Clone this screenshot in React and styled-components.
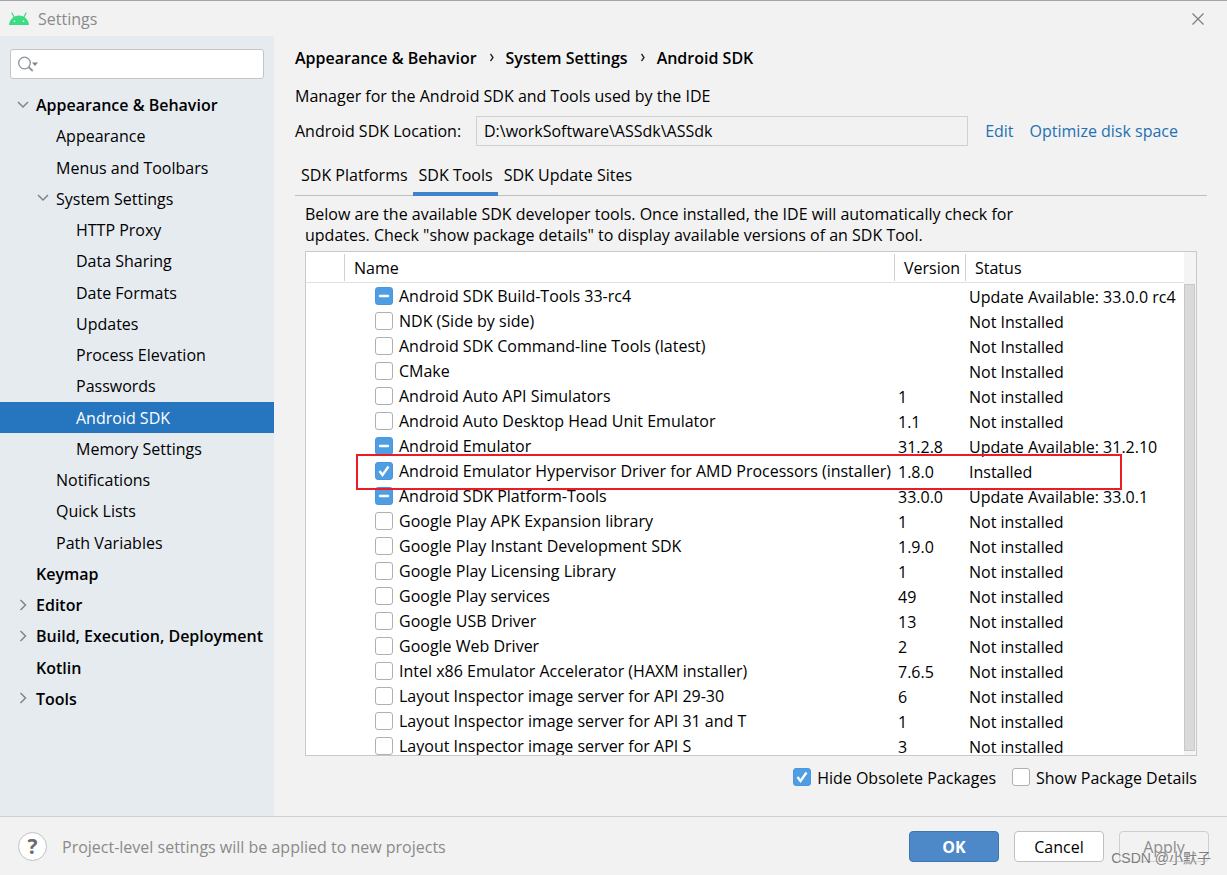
import React from "react";
import styled, { createGlobalStyle, css } from "styled-components";

const GlobalStyle = createGlobalStyle`
  *, *::before, *::after { box-sizing: border-box; }
  body {
    margin: 0;
    background: #f2f2f2;
    color: #000;
    font: 16px/21px "Open Sans", "Noto Sans CJK SC", sans-serif;
  }
  button, input { font: inherit; color: inherit; }
`;

const Dialog = styled.div`
  display: flex;
  flex-direction: column;
  height: 100vh;
  overflow: hidden;
  border-top: 1px solid #a6a6a8;
`;

const TitleBar = styled.header`
  display: flex;
  align-items: center;
  flex: none;
  height: 35px;
  padding: 0 22px 0 8px;
  color: #8a8a8a;
`;

const Title = styled.h1`
  flex: 1;
  margin: 0 0 0 8px;
  padding-top: 2px;
  font-size: 16px;
  font-weight: 400;
  line-height: 21px;
`;

const IconButton = styled.button`
  display: flex;
  padding: 0;
  border: 0;
  background: none;
  color: #7d7d7d;
`;

const Body = styled.div`
  display: flex;
  flex: 1;
  min-height: 0;
`;

const Sidebar = styled.aside`
  flex: none;
  width: 274px;
  padding-top: 13px;
  overflow: hidden;
  background: #e6ebf0;
`;

const SearchBox = styled.label`
  display: flex;
  align-items: center;
  height: 30px;
  margin: 0 10px 10px;
  padding: 0 6px;
  border: 1px solid #c2c5c8;
  border-radius: 3px;
  background: #fff;
`;

const SearchInput = styled.input`
  flex: 1;
  min-width: 0;
  border: 0;
  outline: 0;
  background: none;
`;

const Tree = styled.ul`
  display: grid;
  grid-auto-rows: 1fr;
  height: 625px;
  margin: 0;
  padding: 0;
  list-style: none;
`;

const TreeItem = styled.li`
  display: flex;
  align-items: center;
  padding-left: ${(p) => 16 + p.$level * 20}px;
  font-weight: ${(p) => (p.$level === 0 ? 600 : 400)};
  white-space: nowrap;
  ${(p) =>
    p.$selected &&
    css`
      background: #2675bf;
      color: #fff;
    `}
`;

const TreeArrow = styled.span`
  display: flex;
  flex: none;
  width: 20px;
`;

const ItemText = styled.span`
  padding-top: 2px;
`;

const Content = styled.main`
  display: flex;
  flex: 1;
  flex-direction: column;
  min-width: 0;
  padding: 8px 20px 18px 21px;
`;

const Breadcrumbs = styled.nav`
  display: flex;
  align-items: center;
  height: 28px;
  font-weight: 600;
`;

const Crumb = styled.span`
  display: flex;
  align-items: center;
`;

const CrumbArrow = styled.svg`
  margin: 0 11px 0 12px;
`;

const Intro = styled.p`
  height: 28px;
  margin: 10px 0 6px;
  line-height: 28px;
`;

const LocationRow = styled.div`
  display: flex;
  align-items: center;
  padding-right: 29px;
`;

const LocationLabel = styled.label`
  flex: none;
  width: 181px;
`;

const LocationInput = styled.input`
  flex: 1;
  min-width: 0;
  height: 30px;
  margin-right: 17px;
  padding: 0 7px;
  border: 1px solid #d0d0d0;
  outline: 0;
  background: #f2f2f2;
`;

const Link = styled.a`
  margin-left: ${(p) => (p.$spaced ? 16 : 0)}px;
  color: #2470b3;
  text-decoration: none;
`;

const Tabs = styled.div`
  display: flex;
  height: 43px;
  margin-top: 7px;
  box-shadow: inset 0 -1px #c0c0c0;
`;

const Tab = styled.button`
  padding: 6px 5px 0 6px;
  border: 0;
  border-bottom: 4px solid ${(p) => (p.$active ? "#4083c9" : "transparent")};
  background: none;
`;

const Panel = styled.section`
  display: flex;
  flex: 1;
  flex-direction: column;
  min-height: 0;
  padding: 8px 10px 0;
`;

const Description = styled.p`
  max-width: 740px;
  margin: 0 0 5px;
`;

const TableFrame = styled.div`
  position: relative;
  display: flex;
  flex: 1;
  align-items: flex-start;
  min-height: 0;
  overflow: hidden;
  border: 1px solid #c9c9c9;
  background: #fff;
`;

const PackageTable = styled.table`
  flex: 1;
  min-width: 0;
  table-layout: fixed;
  border-collapse: separate;
  border-spacing: 0;
`;

const Column = styled.col`
  width: ${(p) => p.$width};
`;

const HeaderCell = styled.th`
  height: 31px;
  padding: 0;
  border-bottom: 1px solid #e0e0e0;
  font-weight: 400;
  text-align: left;
`;

const HeaderText = styled.span`
  display: block;
  padding: 2px 0 0 9px;
  border-left: 1px solid #d0d0d0;
  line-height: 25px;
`;

const NameCell = styled.td`
  height: 25px;
  padding: 0 0 0 31px;
`;

const ValueCell = styled.td`
  height: 25px;
  padding: 4px 0 0 4px;
  white-space: nowrap;
`;

const CheckLabel = styled.label`
  display: flex;
  align-items: center;
  gap: 6px;
  white-space: nowrap;
`;

const CheckBox = styled.span`
  display: grid;
  flex: none;
  width: 18px;
  height: 18px;

  > * {
    grid-area: 1 / 1;
    width: 18px;
    height: 18px;
    margin: 0;
  }
`;

const CheckInput = styled.input`
  appearance: none;
  border: 1px solid ${(p) => (p.$filled ? "#4b97df" : "#b0b0b0")};
  border-radius: 3px;
  background: ${(p) => (p.$filled ? "#4f9ee3" : "#fff")};
`;

const CheckMark = styled.svg`
  pointer-events: none;
`;

const ScrollBar = styled.div`
  flex: none;
  align-self: stretch;
  width: 12px;
  padding: 32px 1px 4px 0;
  background: #f4f4f4;
`;

const ScrollThumb = styled.div`
  height: 100%;
  border: 1px solid #c8c8c8;
  background: #dadada;
`;

const RowHighlight = styled.div`
  position: absolute;
  top: 202px;
  right: 74px;
  left: 50px;
  height: 36px;
  border: 2px solid #ed1c24;
  pointer-events: none;
`;

const Options = styled.div`
  display: flex;
  align-items: center;
  justify-content: flex-end;
  gap: 16px;
  height: 42px;
`;

const Footer = styled.footer`
  position: relative;
  display: flex;
  align-items: center;
  flex: none;
  gap: 15px;
  height: 59px;
  padding: 0 18px;
  border-top: 1px solid #d0d0d0;
`;

const HelpButton = styled.button`
  width: 29px;
  height: 29px;
  padding: 0;
  border: 1px solid #c0c0c0;
  border-radius: 50%;
  background: #fff;
  color: #6a6a6a;
  font-size: 21px;
  font-weight: 700;
  line-height: 27px;
`;

const FooterNote = styled.span`
  flex: 1;
  padding-top: 2px;
  color: #8a8a8a;
`;

const buttonKinds = {
  primary: css`
    border-color: #3d75b3;
    background: #4d89c9;
    color: #fff;
    font-weight: 700;
  `,
  normal: css`
    border-color: #c0c0c0;
    background: #fff;
  `,
  disabled: css`
    border-color: #cfcfcf;
    background: #f2f2f2;
    color: #8c8c8c;
  `,
};

const ActionButton = styled.button`
  width: 90px;
  height: 31px;
  padding: 2px 0 0;
  border: 1px solid;
  border-radius: 4px;
  ${(p) => buttonKinds[p.$kind]}
`;

const Watermark = styled.span`
  position: absolute;
  right: 16px;
  bottom: 7px;
  color: #7c7c7c;
  font: 14px/20px "Liberation Sans", "Noto Sans CJK SC", sans-serif;
  text-shadow: 0 0 1px #fff;
`;

const tree = [
  ["Appearance & Behavior", 0, "open"],
  ["Appearance", 1],
  ["Menus and Toolbars", 1],
  ["System Settings", 1, "open"],
  ["HTTP Proxy", 2],
  ["Data Sharing", 2],
  ["Date Formats", 2],
  ["Updates", 2],
  ["Process Elevation", 2],
  ["Passwords", 2],
  ["Android SDK", 2, null, true],
  ["Memory Settings", 2],
  ["Notifications", 1],
  ["Quick Lists", 1],
  ["Path Variables", 1],
  ["Keymap", 0],
  ["Editor", 0, "closed"],
  ["Build, Execution, Deployment", 0, "closed"],
  ["Kotlin", 0],
  ["Tools", 0, "closed"],
];

const packages = [
  ["Android SDK Build-Tools 33-rc4", "", "Update Available: 33.0.0 rc4", "partial"],
  ["NDK (Side by side)", "", "Not Installed"],
  ["Android SDK Command-line Tools (latest)", "", "Not Installed"],
  ["CMake", "", "Not Installed"],
  ["Android Auto API Simulators", "1", "Not installed"],
  ["Android Auto Desktop Head Unit Emulator", "1.1", "Not installed"],
  ["Android Emulator", "31.2.8", "Update Available: 31.2.10", "partial"],
  ["Android Emulator Hypervisor Driver for AMD Processors (installer)", "1.8.0", "Installed", "checked"],
  ["Android SDK Platform-Tools", "33.0.0", "Update Available: 33.0.1", "partial"],
  ["Google Play APK Expansion library", "1", "Not installed"],
  ["Google Play Instant Development SDK", "1.9.0", "Not installed"],
  ["Google Play Licensing Library", "1", "Not installed"],
  ["Google Play services", "49", "Not installed"],
  ["Google USB Driver", "13", "Not installed"],
  ["Google Web Driver", "2", "Not installed"],
  ["Intel x86 Emulator Accelerator (HAXM installer)", "7.6.5", "Not installed"],
  ["Layout Inspector image server for API 29-30", "6", "Not installed"],
  ["Layout Inspector image server for API 31 and T", "1", "Not installed"],
  ["Layout Inspector image server for API S", "3", "Not installed"],
];

function AndroidLogo() {
  return (
    <svg width="22" height="14" viewBox="0 0 22 14" aria-hidden="true">
      <path d="M1 13C1.300 8.500 5.200 3.500 11 3.500s9.700 5 10 9.500z" fill="#3ddc84" />
      <path d="M6.200 5.500 4 1M15.800 5.500 18 1" stroke="#3ddc84" strokeWidth="1.200" strokeLinecap="round" />
      <circle cx="6.500" cy="9.300" r="0.800" fill="#fff" />
      <circle cx="15.500" cy="9.300" r="0.800" fill="#fff" />
    </svg>
  );
}

function SearchIcon() {
  return (
    <svg width="22" height="18" viewBox="0 0 22 18" aria-hidden="true">
      <circle cx="7.500" cy="8" r="5.800" fill="none" stroke="#8a949d" strokeWidth="1.300" />
      <path d="m11.500 12 4.200 4" stroke="#8a949d" strokeWidth="1.800" />
      <path d="M15 7.500h6L18 11z" fill="#7b848c" />
    </svg>
  );
}

function Arrow({ state }) {
  return (
    <svg width="14" height="14" viewBox="0 0 14 14" aria-hidden="true">
      <path
        d={state === "open" ? "M2 4 7 9l5-5" : "M4.500 2l5 5-5 5"}
        fill="none"
        stroke="#808488"
        strokeWidth="1.500"
      />
    </svg>
  );
}

function Check({ state, children }) {
  return (
    <CheckLabel>
      <CheckBox>
        <CheckInput type="checkbox" defaultChecked={state === "checked"} $filled={Boolean(state)} />
        {state && (
          <CheckMark viewBox="0 0 18 18" aria-hidden="true">
            {state === "checked" ? (
              <path d="m4.500 9 3 4L13.500 4.500" fill="none" stroke="#fff" strokeWidth="2.300" />
            ) : (
              <path d="M5 9h8" stroke="#fff" strokeWidth="2.400" strokeLinecap="round" />
            )}
          </CheckMark>
        )}
      </CheckBox>
      <ItemText>{children}</ItemText>
    </CheckLabel>
  );
}

export default function App() {
  return (
    <>
      <GlobalStyle />
      <Dialog>
        <TitleBar>
          <AndroidLogo />
          <Title>Settings</Title>
          <IconButton aria-label="Close">
            <svg width="14" height="14" viewBox="0 0 14 14">
              <path d="m1.500 1.500 11 11m0-11-11 11" stroke="currentColor" strokeWidth="1.200" />
            </svg>
          </IconButton>
        </TitleBar>
        <Body>
          <Sidebar>
            <SearchBox>
              <SearchIcon />
              <SearchInput type="text" aria-label="Search settings" />
            </SearchBox>
            <Tree>
              {tree.map(([name, level, arrow, selected]) => (
                <TreeItem key={name} $level={level} $selected={selected}>
                  <TreeArrow>{arrow && <Arrow state={arrow} />}</TreeArrow>
                  <ItemText>{name}</ItemText>
                </TreeItem>
              ))}
            </Tree>
          </Sidebar>
          <Content>
            <Breadcrumbs>
              {["Appearance & Behavior", "System Settings", "Android SDK"].map((name, i) => (
                <Crumb key={name}>
                  {i > 0 && (
                    <CrumbArrow width="6" height="10" viewBox="0 0 6 10" aria-hidden="true">
                      <path d="m1.500 1 2.500 3.500L1.500 8" fill="none" stroke="#222" strokeWidth="1.300" />
                    </CrumbArrow>
                  )}
                  {name}
                </Crumb>
              ))}
            </Breadcrumbs>
            <Intro>Manager for the Android SDK and Tools used by the IDE</Intro>
            <LocationRow>
              <LocationLabel htmlFor="sdk-location">Android SDK Location:</LocationLabel>
              <LocationInput id="sdk-location" type="text" readOnly value="D:\workSoftware\ASSdk\ASSdk" />
              <Link href="#edit">Edit</Link>
              <Link href="#optimize" $spaced>Optimize disk space</Link>
            </LocationRow>
            <Tabs role="tablist">
              <Tab role="tab">SDK Platforms</Tab>
              <Tab role="tab" aria-selected="true" $active>SDK Tools</Tab>
              <Tab role="tab">SDK Update Sites</Tab>
            </Tabs>
            <Panel>
              <Description>
                Below are the available SDK developer tools. Once installed, the IDE will automatically check for
                updates. Check "show package details" to display available versions of an SDK Tool.
              </Description>
              <TableFrame>
                <PackageTable>
                  <colgroup>
                    <Column $width="38px" />
                    <Column $width="auto" />
                    <Column $width="71px" />
                    <Column $width="219px" />
                  </colgroup>
                  <thead>
                    <tr>
                      <HeaderCell />
                      <HeaderCell><HeaderText>Name</HeaderText></HeaderCell>
                      <HeaderCell><HeaderText>Version</HeaderText></HeaderCell>
                      <HeaderCell><HeaderText>Status</HeaderText></HeaderCell>
                    </tr>
                  </thead>
                  <tbody>
                    {packages.map(([name, version, status, state]) => (
                      <tr key={name}>
                        <td />
                        <NameCell><Check state={state}>{name}</Check></NameCell>
                        <ValueCell>{version}</ValueCell>
                        <ValueCell>{status}</ValueCell>
                      </tr>
                    ))}
                  </tbody>
                </PackageTable>
                <ScrollBar><ScrollThumb /></ScrollBar>
                <RowHighlight />
              </TableFrame>
              <Options>
                <Check state="checked">Hide Obsolete Packages</Check>
                <Check>Show Package Details</Check>
              </Options>
            </Panel>
          </Content>
        </Body>
        <Footer>
          <HelpButton aria-label="Help">?</HelpButton>
          <FooterNote>Project-level settings will be applied to new projects</FooterNote>
          <ActionButton $kind="primary">OK</ActionButton>
          <ActionButton $kind="normal">Cancel</ActionButton>
          <ActionButton $kind="disabled" disabled>Apply</ActionButton>
          <Watermark>CSDN @小默子</Watermark>
        </Footer>
      </Dialog>
    </>
  );
}
